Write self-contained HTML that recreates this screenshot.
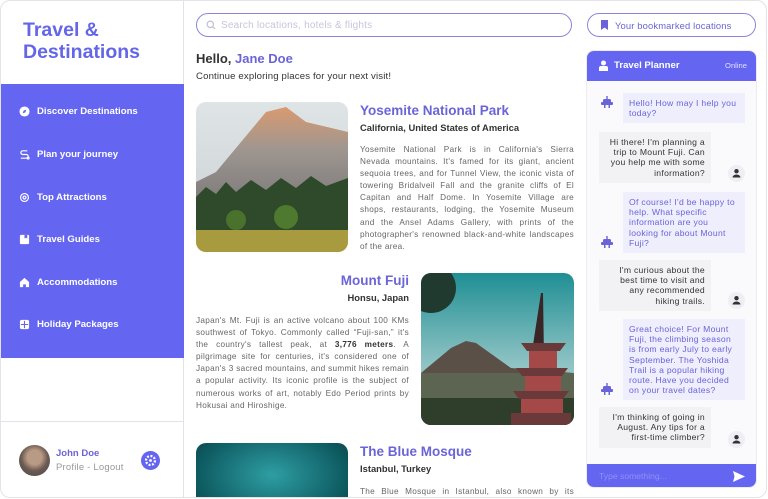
<!DOCTYPE html>
<html><head><meta charset="utf-8">
<style>
*{margin:0;padding:0;box-sizing:border-box}
body{width:768px;height:499px;overflow:hidden;background:#fff;font-family:"Liberation Sans",sans-serif;position:relative}
.frame{position:absolute;left:0;top:0;width:767px;height:498px;border:1px solid #e3e3e8;border-radius:10px;overflow:hidden;background:#fff}
.abs{position:absolute}
.side{left:0;top:0;width:183px;height:498px;border-right:1px solid #e2e2e8}
.logo{left:22px;top:18px;font-size:19.5px;font-weight:bold;color:#6466e9;line-height:22px}
.menu{left:0;top:83px;width:183px;height:274px;background:#6466f1}
.mi{position:absolute;left:18px;color:#fff;font-size:9.6px;font-weight:bold;display:flex;align-items:center;gap:7px}
.mi svg{width:11px;height:11px}
.foot{left:0;top:420px;width:183px;border-top:1px solid #e2e2e8;height:80px}
.av{left:18px;top:444px;width:31px;height:31px;border-radius:50%;background:radial-gradient(circle at 50% 40%,#b99a85 0 30%,#6b5a52 55%,#4a4a4a 100%)}
.nm{left:55px;top:447px;font-size:9.5px;font-weight:bold;color:#6a64d8}
.pl{left:55px;top:461px;font-size:9.5px;color:#999;letter-spacing:.2px}
.gear{left:140px;top:450px;width:19px;height:19px;border-radius:50%;background:#6466f1}
.search{left:195px;top:12px;width:376px;height:24px;border:1.3px solid #8b86dc;border-radius:12px;font-size:10px;color:#c6c6dc;padding:6px 0 0 24px;letter-spacing:.2px}
.hello{left:195px;top:50px;font-size:13px;font-weight:bold;color:#333}
.hello span{color:#6a64d8}
.sub{left:195px;top:70px;font-size:9.6px;color:#333;letter-spacing:.15px}
.img{border-radius:10px;overflow:hidden}
.t{font-size:13.5px;font-weight:bold;color:#6a64d8}
.st{font-size:9.4px;font-weight:bold;color:#333}
.p{font-size:8.2px;line-height:12.1px;color:#666;text-align:justify;letter-spacing:.3px}
.p b{color:#333}
.bm{left:586px;top:12px;width:169px;height:24px;border:1.3px solid #8b86dc;border-radius:12px;font-size:9.4px;color:#6a64d8;padding:6px 0 0 27px;letter-spacing:.15px}
.chat{left:585px;top:49px;width:171px;height:438px;border-radius:8px;overflow:hidden;background:#fafafc;border:1px solid #ececf2}
.ch{left:0;top:0;width:171px;height:30px;background:#6466f1;color:#fff;font-size:9.6px;font-weight:bold;padding:9px 0 0 27px}
.ch i{position:absolute;right:11px;top:10px;font-style:normal;font-weight:normal;font-size:7.6px;color:#e0e0ff}
.bub{position:absolute;font-size:8.6px;line-height:10.2px;padding:5px 6px;letter-spacing:.3px}
.bot{left:36px;width:122px;background:#eeeefd;color:#6a64d8}
.usr{left:12px;width:120px;background:#f2f2f4;color:#333;text-align:right}
.ic{position:absolute;width:17px;height:17px;border-radius:50%;background:#eeeef4}
.rb{position:absolute;width:12px;height:12px}
.in{left:0;top:413px;width:171px;height:25px;background:#6466f1;font-size:8.6px;color:#8f8ff5;padding:7px 0 0 12px}
</style></head><body>
<div class="frame">
<div class="abs side">
 <div class="abs logo">Travel &amp;<br>Destinations</div>
 <div class="abs menu">
  <div class="mi" style="top:22px"><svg viewBox="0 0 12 12"><circle cx="6" cy="6" r="5.5" fill="#fff"/><path d="M4 8l1-3 3-1-1 3z" fill="#6466f1"/></svg>Discover Destinations</div>
  <div class="mi" style="top:65px"><svg viewBox="0 0 12 12" fill="none" stroke="#fff" stroke-width="1.3"><path d="M9 2H4a2 2 0 000 4h4a2 2 0 010 4H2"/><circle cx="10" cy="10" r="1"/></svg>Plan your journey</div>
  <div class="mi" style="top:108px"><svg viewBox="0 0 12 12" fill="none" stroke="#fff" stroke-width="1.3"><circle cx="6" cy="6" r="4.3"/><circle cx="6" cy="6" r="1.6"/></svg>Top Attractions</div>
  <div class="mi" style="top:150px"><svg viewBox="0 0 12 12"><rect x="1" y="1" width="10" height="10" rx="1" fill="#fff"/><path d="M6 1v4l1.5-1 1.5 1V1z" fill="#6466f1"/></svg>Travel Guides</div>
  <div class="mi" style="top:193px"><svg viewBox="0 0 12 12"><path d="M6 1l5 4.5V11H7.5V8h-3v3H1V5.5z" fill="#fff"/></svg>Accommodations</div>
  <div class="mi" style="top:235px"><svg viewBox="0 0 12 12"><rect x="1" y="1" width="10" height="10" rx="2" fill="#fff"/><path d="M6 2v8M2 6h8" stroke="#6466f1" stroke-width="1.2"/></svg>Holiday Packages</div>
 </div>
 <div class="abs foot"></div>
 <div class="abs av"></div>
 <div class="abs nm">John Doe</div>
 <div class="abs pl">Profile - Logout</div>
 <div class="abs gear"><svg width="19" height="19" viewBox="0 0 19 19"><circle cx="9.5" cy="9.5" r="4.5" fill="none" stroke="#fff" stroke-width="2.2" stroke-dasharray="2 1.5"/><circle cx="9.5" cy="9.5" r="1.4" fill="#fff"/></svg></div>
</div>

<div class="abs search"><svg class="abs" style="left:9px;top:6px" width="10" height="10" viewBox="0 0 10 10" fill="none" stroke="#c0c0d8" stroke-width="1.2"><circle cx="4.3" cy="4.3" r="3.2"/><path d="M6.7 6.7L9 9"/></svg>Search locations, hotels &amp; flights</div>
<div class="abs hello">Hello, <span>Jane Doe</span></div>
<div class="abs sub">Continue exploring places for your next visit!</div>

<div class="abs img" style="left:195px;top:101px;width:152px;height:150px">
<svg width="152" height="150" viewBox="0 0 152 150"><defs><linearGradient id="s1" x1="0" y1="0" x2="0" y2="1"><stop offset="0" stop-color="#dfe4e6"/><stop offset="1" stop-color="#c9cfd2"/></linearGradient><linearGradient id="m1" x1="0" y1="0" x2="0" y2="1"><stop offset="0" stop-color="#d99a70"/><stop offset=".4" stop-color="#9f9690"/><stop offset="1" stop-color="#777"/></linearGradient></defs>
<rect width="152" height="150" fill="url(#s1)"/><path d="M0 80 L20 70 L45 40 L70 10 L90 5 L110 20 L152 30 L152 110 L0 110z" fill="url(#m1)"/>
<path d="M0 95 L10 85 L20 92 L30 80 L40 90 L55 78 L70 88 L85 76 L100 86 L115 74 L130 84 L152 76 L152 130 L0 130z" fill="#2f4a2a"/>
<circle cx="90" cy="115" r="12" fill="#4e7a30"/><circle cx="40" cy="118" r="10" fill="#4a722d"/>
<rect y="128" width="152" height="22" fill="#a89a3e"/></svg></div>
<div class="abs t" style="left:359px;top:102px">Yosemite National Park</div>
<div class="abs st" style="left:359px;top:121px">California, United States of America</div>
<div class="abs p" style="left:359px;top:143px;width:214px">Yosemite National Park is in California's Sierra Nevada mountains. It's famed for its giant, ancient sequoia trees, and for Tunnel View, the iconic vista of towering Bridalveil Fall and the granite cliffs of El Capitan and Half Dome. In Yosemite Village are shops, restaurants, lodging, the Yosemite Museum and the Ansel Adams Gallery, with prints of the photographer's renowned black-and-white landscapes of the area.</div>

<div class="abs t" style="left:195px;top:272px;width:213px;text-align:right">Mount Fuji</div>
<div class="abs st" style="left:195px;top:291px;width:213px;text-align:right">Honsu, Japan</div>
<div class="abs p" style="left:195px;top:314px;width:213px">Japan's Mt. Fuji is an active volcano about 100 KMs southwest of Tokyo. Commonly called “Fuji-san,” it's the country's tallest peak, at <b>3,776 meters</b>. A pilgrimage site for centuries, it's considered one of Japan's 3 sacred mountains, and summit hikes remain a popular activity. Its iconic profile is the subject of numerous works of art, notably Edo Period prints by Hokusai and Hiroshige.</div>
<div class="abs img" style="left:420px;top:272px;width:153px;height:152px">
<svg width="153" height="152" viewBox="0 0 153 152"><defs><linearGradient id="s2" x1="0" y1="0" x2="0" y2="1"><stop offset="0" stop-color="#1f8f94"/><stop offset=".6" stop-color="#8fc3c4"/><stop offset="1" stop-color="#b9d3cf"/></linearGradient></defs>
<rect width="153" height="152" fill="url(#s2)"/><circle cx="10" cy="15" r="25" fill="#203a30"/>
<path d="M0 100 L30 75 L45 68 L55 70 L90 95 L153 100 L153 152 L0 152z" fill="#5a5048"/>
<rect y="100" width="153" height="52" fill="#5c6552"/><rect y="125" width="153" height="27" fill="#2e3e2a"/>
<path d="M120 20 L122 20 L124 150 L100 150z" fill="#3a2626"/>
<path d="M100 70h45l-6 8h-33zM95 95h52l-6 8h-40zM92 118h56l-6 8h-44zM90 140h60v12H90z" fill="#6a3a3a"/>
<rect x="108" y="78" width="28" height="17" fill="#a54848"/><rect x="104" y="103" width="36" height="15" fill="#a54848"/><rect x="100" y="126" width="42" height="14" fill="#a54848"/></svg></div>

<div class="abs img" style="left:195px;top:442px;width:152px;height:80px;background:radial-gradient(ellipse at 50% 40%,#2e9ea3,#0d5a60 70%,#0a3c40)"></div>
<div class="abs t" style="left:359px;top:443px">The Blue Mosque</div>
<div class="abs st" style="left:359px;top:462px">Istanbul, Turkey</div>
<div class="abs p" style="left:359px;top:485px;width:214px;text-align-last:justify">The Blue Mosque in Istanbul, also known by its</div>

<div class="abs bm"><svg class="abs" style="left:12px;top:6px" width="9" height="10" viewBox="0 0 9 10"><path d="M1 0h7v10L4.5 7.5 1 10z" fill="#6a64d8"/></svg>Your bookmarked locations</div>

<div class="abs chat">
 <div class="abs ch"><svg class="abs" style="left:11px;top:9px" width="11" height="11" viewBox="0 0 11 11" fill="#fff"><circle cx="5.5" cy="3" r="2.5"/><path d="M1 11V8a2 2 0 012-2h5a2 2 0 012 2v3z"/></svg>Travel Planner<i>Online</i></div>
 <div class="bub bot" style="top:42px">Hello! How may I help you today?</div>
 <svg class="rb" style="left:14px;top:45px" viewBox="0 0 12 12" fill="#6a64d8"><rect x="5.3" y="0" width="1.4" height="3"/><rect x="2" y="3" width="8" height="5" rx="1.5"/><rect x="0" y="6" width="12" height="3" rx="1"/><rect x="3" y="9" width="1.5" height="3"/><rect x="7.5" y="9" width="1.5" height="3"/></svg>
 <div class="bub usr" style="top:81px;width:112px;left:12px">Hi there! I'm planning a trip to Mount Fuji. Can you help me with some information?</div>
 <div class="ic" style="left:141px;top:114px"><svg width="17" height="17" viewBox="0 0 17 17" fill="#333"><circle cx="8.5" cy="6.2" r="2.2"/><path d="M4.5 12.5a4 3 0 018 0z"/></svg></div>
 <div class="bub bot" style="top:141px">Of course! I'd be happy to help. What specific information are you looking for about Mount Fuji?</div>
 <svg class="rb" style="left:14px;top:185px" viewBox="0 0 12 12" fill="#6a64d8"><rect x="5.3" y="0" width="1.4" height="3"/><rect x="2" y="3" width="8" height="5" rx="1.5"/><rect x="0" y="6" width="12" height="3" rx="1"/><rect x="3" y="9" width="1.5" height="3"/><rect x="7.5" y="9" width="1.5" height="3"/></svg>
 <div class="bub usr" style="top:209px;width:112px">I'm curious about the best time to visit and any recommended hiking trails.</div>
 <div class="ic" style="left:141px;top:241px"><svg width="17" height="17" viewBox="0 0 17 17" fill="#333"><circle cx="8.5" cy="6.2" r="2.2"/><path d="M4.5 12.5a4 3 0 018 0z"/></svg></div>
 <div class="bub bot" style="top:268px">Great choice! For Mount Fuji, the climbing season is from early July to early September. The Yoshida Trail is a popular hiking route. Have you decided on your travel dates?</div>
 <svg class="rb" style="left:14px;top:332px" viewBox="0 0 12 12" fill="#6a64d8"><rect x="5.3" y="0" width="1.4" height="3"/><rect x="2" y="3" width="8" height="5" rx="1.5"/><rect x="0" y="6" width="12" height="3" rx="1"/><rect x="3" y="9" width="1.5" height="3"/><rect x="7.5" y="9" width="1.5" height="3"/></svg>
 <div class="bub usr" style="top:356px;width:112px">I'm thinking of going in August. Any tips for a first-time climber?</div>
 <div class="ic" style="left:141px;top:380px"><svg width="17" height="17" viewBox="0 0 17 17" fill="#333"><circle cx="8.5" cy="6.2" r="2.2"/><path d="M4.5 12.5a4 3 0 018 0z"/></svg></div>
 <div class="abs in">Type something...<svg class="abs" style="left:146px;top:7px" width="12" height="11" viewBox="0 0 12 11"><path d="M0 0l12 5.5L0 11l1.5-5.5z" fill="#fff"/></svg></div>
</div>
</div>
</body></html>
